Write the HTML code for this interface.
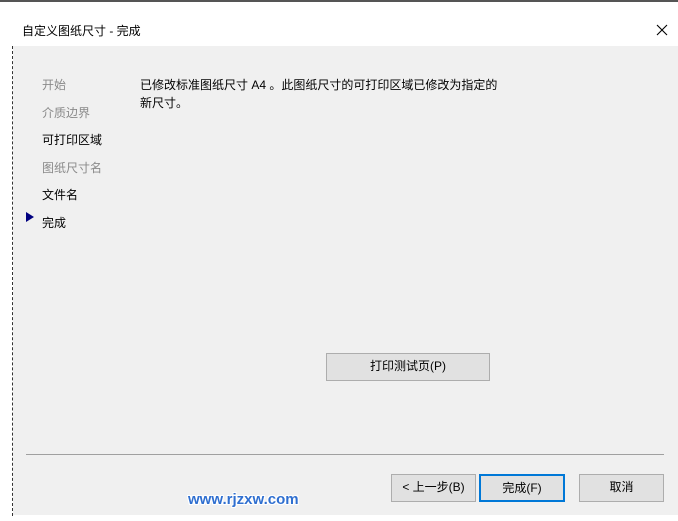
<!DOCTYPE html>
<html><head><meta charset="utf-8"><style>
body{margin:0;width:678px;height:521px;position:relative;overflow:hidden;background:#fff;font-family:"Liberation Sans","Noto Sans CJK SC",sans-serif;font-size:12px;color:#000}
.a{position:absolute}
.body{left:13px;top:46px;width:665px;height:469px;background:#f0f0f0}
.btn{position:absolute;background:#e1e1e1;border:1px solid #adadad;box-sizing:border-box;text-align:center;line-height:25px;font-size:12px}
.s{left:42px;font-size:12px}
.g{color:#8a8a8a}
</style></head><body>
<div class="a" style="left:0;top:0;width:678px;height:2px;background:#555"></div>
<div class="a" style="left:12px;top:46px;width:1px;height:470px;border-left:1px dashed #333"></div>
<div class="a" style="left:22px;top:22px;font-size:12px">自定义图纸尺寸 - 完成</div>
<svg class="a" style="left:656px;top:24px" width="12" height="12"><path d="M1 1L11 11M11 1L1 11" stroke="#000" stroke-width="1.1"/></svg>
<div class="a body"></div>
<div class="a s g" style="top:76px">开始</div>
<div class="a s g" style="top:104px">介质边界</div>
<div class="a s" style="top:131px">可打印区域</div>
<div class="a s g" style="top:159px">图纸尺寸名</div>
<div class="a s" style="top:186px">文件名</div>
<div class="a s" style="top:214px">完成</div>
<div class="a" style="left:26px;top:212px;width:0;height:0;border-left:8px solid #000080;border-top:5px solid transparent;border-bottom:5px solid transparent"></div>
<div class="a" style="left:140px;top:76px;line-height:18px">已修改标准图纸尺寸 A4 。此图纸尺寸的可打印区域已修改为指定的<br>新尺寸。</div>
<div class="btn" style="left:326px;top:353px;width:164px;height:28px">打印测试页(P)</div>
<div class="a" style="left:26px;top:454px;width:638px;height:1px;background:#a0a0a0"></div>
<div class="btn" style="left:391px;top:474px;width:85px;height:28px">&lt; 上一步(B)</div>
<div class="btn" style="left:479px;top:474px;width:86px;height:28px;border:2px solid #0078d7;line-height:24px">完成(F)</div>
<div class="btn" style="left:579px;top:474px;width:85px;height:28px">取消</div>
<div class="a" style="left:188px;top:491px;font-size:15px;font-weight:bold;color:#2f6fd0;text-shadow:1px 1px 0 #fff,-1px -1px 0 #fff,1px -1px 0 #fff,-1px 1px 0 #fff">www.rjzxw.com</div>
</body></html>
